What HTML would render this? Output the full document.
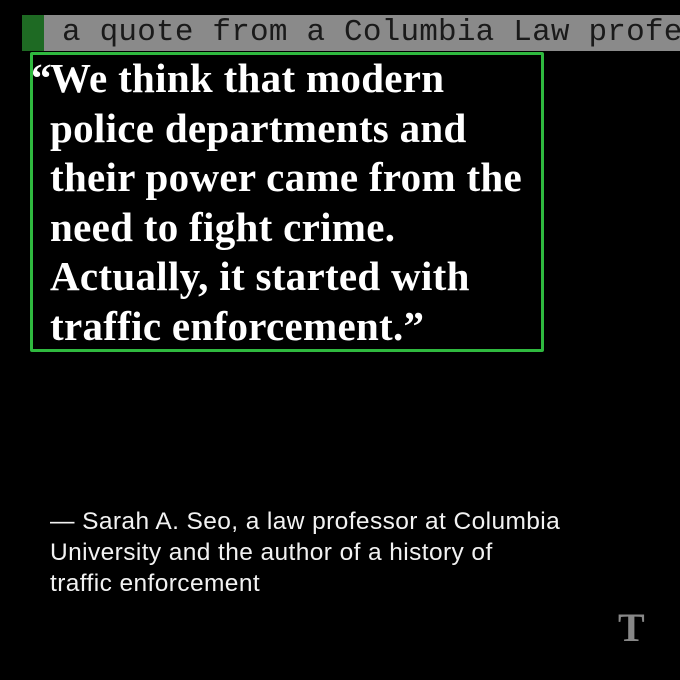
<!DOCTYPE html>
<html><head><meta charset="utf-8"><style>
body{margin:0;width:680px;height:680px;background:#000;position:relative;overflow:hidden}
.bar{position:absolute;left:22px;top:15px;width:658px;height:36px;background:#8a8a8a;overflow:hidden;white-space:nowrap}
.sq{position:absolute;left:0;top:0;width:22px;height:36px;background:#1e6a23}
.bar span{position:absolute;left:40px;top:0;font:31px/36px "Liberation Mono",monospace;color:#1a1a1a;letter-spacing:0.2px}
.box{position:absolute;left:30px;top:52px;width:508px;height:294px;border:3px solid #2fb93f;border-radius:2px}
.q{position:absolute;left:50px;top:54px;width:560px;font:bold 41px/49.5px "Liberation Serif",serif;color:#fff;letter-spacing:0.3px;white-space:nowrap}
.q .h{position:absolute;left:-19px}
.a{position:absolute;left:50px;top:506px;width:600px;font:24.5px/31px "Liberation Sans",sans-serif;color:#f2f2f2;letter-spacing:0.4px}
.t{position:absolute;left:618px;top:608px;font:bold 40px/40px "Liberation Serif",serif;color:#888}
</style></head><body>
<div class="bar"><div class="sq"></div><span>a quote from a Columbia Law professor</span></div>
<div class="box"></div>
<div class="q"><span class="h">“</span>We think that modern<br>police departments and<br>their power came from the<br>need to fight crime.<br>Actually, it started with<br>traffic enforcement.”</div>
<div class="a">— Sarah A. Seo, a law professor at Columbia<br>University and the author of a history of<br>traffic enforcement</div>
<div class="t">T</div>
</body></html>
